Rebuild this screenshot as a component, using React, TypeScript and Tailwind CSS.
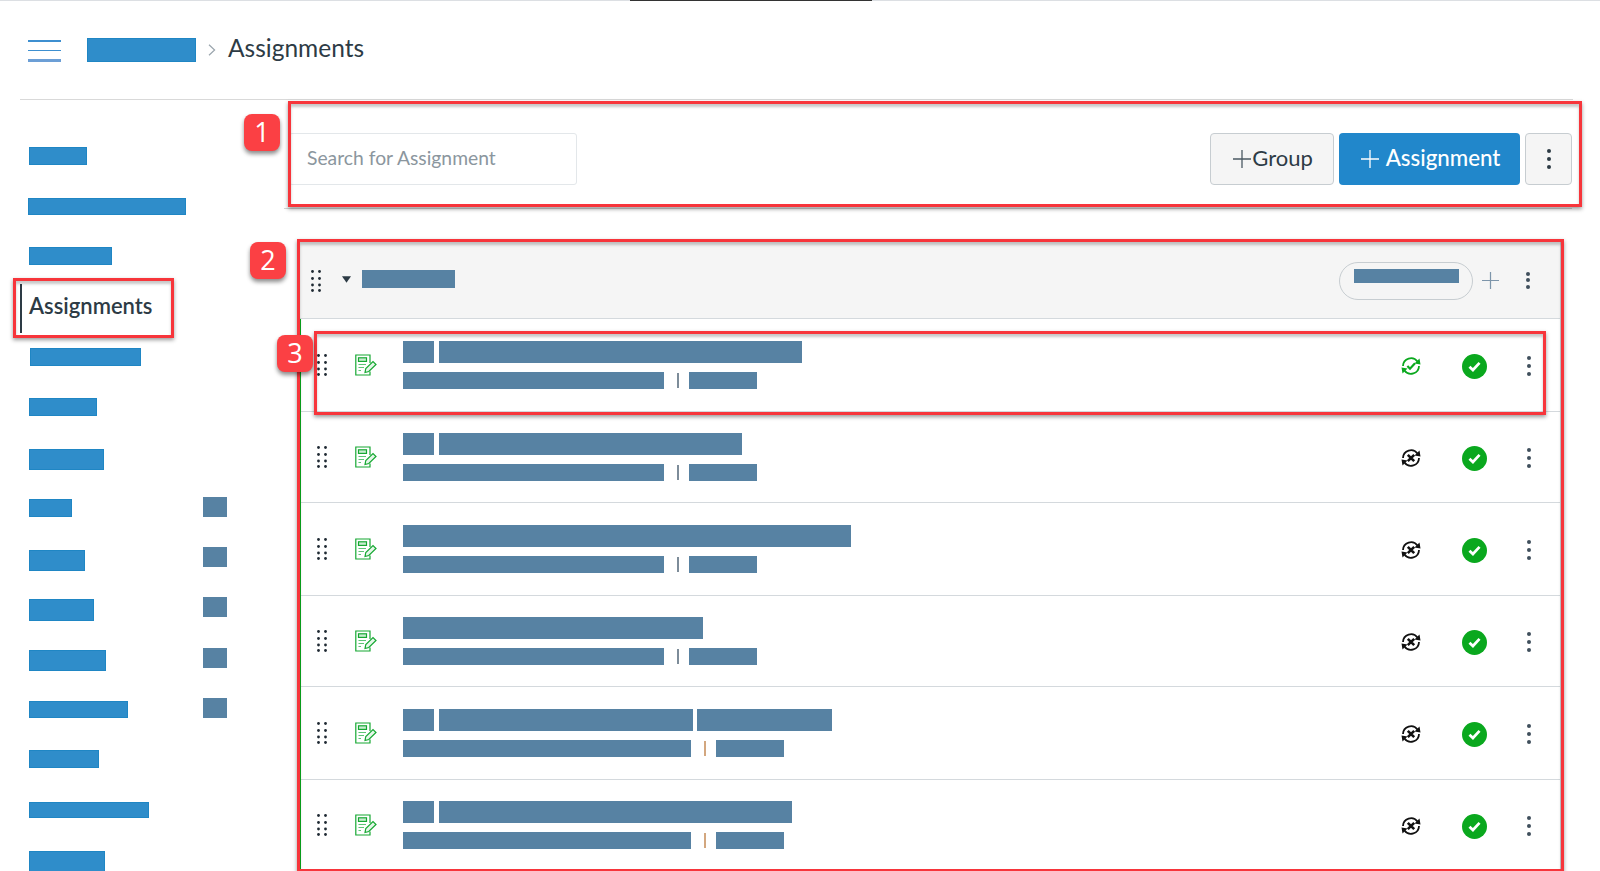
const sideRows = [
  { row: 'h-[51px]', bar: 'ml-[29px] w-[58px] h-[18px]' },
  { row: 'h-[49px]', bar: 'ml-[28px] w-[158px] h-[17px]' },
  { row: 'h-[37px]', bar: 'ml-[29px] w-[83px] h-[18px]' },
  { active: true, row: 'h-[49px] mb-[15px]', bar: '' },
  { row: 'h-[50px]', bar: 'ml-[30px] w-[111px] h-[18px]' },
  { row: 'h-[51px]', bar: 'ml-[29px] w-[68px] h-[18px]' },
  { row: 'h-[48px]', bar: 'ml-[29px] w-[75px] h-[21px]' },
  { row: 'h-[50px]', bar: 'ml-[29px] w-[43px] h-[18px] mt-[2px]', square: 'ml-[131px] mt-0' },
  { row: 'h-[50px]', bar: 'ml-[29px] w-[56px] h-[21px] mt-[3px]', square: 'ml-[118px] mt-0' },
  { row: 'h-[51px]', bar: 'ml-[29px] w-[65px] h-[22px] mt-[2px]', square: 'ml-[109px] mt-0' },
  { row: 'h-[50px]', bar: 'ml-[29px] w-[77px] h-[21px] mt-[2px]', square: 'ml-[97px] mt-0' },
  { row: 'h-[52px]', bar: 'ml-[29px] w-[99px] h-[17px] mt-[3px]', square: 'ml-[75px] mt-0' },
  { row: 'h-[52px]', bar: 'ml-[29px] w-[70px] h-[18px]' },
  { row: 'h-[49px]', bar: 'ml-[29px] w-[120px] h-[16px]' },
  { row: 'h-[30px]', bar: 'ml-[29px] w-[76px] h-[30px]' },
];

const assignmentRows = [
  { row: 'h-[93px]', prefix: true, title: ['w-[363px]'], left: 'w-[261px]', sep: 'bg-[#7d8c99]', right: 'w-[68px]', published: true },
  { row: 'h-[91px]', prefix: true, title: ['w-[303px]'], left: 'w-[261px]', sep: 'bg-[#7d8c99]', right: 'w-[68px]' },
  { row: 'h-[93px]', prefix: false, title: ['w-[448px]'], left: 'w-[261px]', sep: 'bg-[#7d8c99]', right: 'w-[68px]' },
  { row: 'h-[91px]', prefix: false, title: ['w-[300px]'], left: 'w-[261px]', sep: 'bg-[#7d8c99]', right: 'w-[68px]' },
  { row: 'h-[93px]', prefix: true, title: ['w-[254px]', 'w-[135px]'], left: 'w-[288px]', sep: 'bg-[#d3a77f]', right: 'w-[68px]' },
  { row: 'h-[91px]', prefix: true, title: ['w-[353px]'], left: 'w-[288px]', sep: 'bg-[#d3a77f]', right: 'w-[68px]' },
];

function DragDots({ className }: { className: string }) {
  return (
    <svg viewBox="0 0 10 22" className={className} fill="#1f2a33">
      <circle cx="1.5" cy="1.5" r="1.4" />
      <circle cx="8.5" cy="1.5" r="1.4" />
      <circle cx="1.5" cy="8.5" r="1.4" />
      <circle cx="8.5" cy="8.5" r="1.4" />
      <circle cx="1.5" cy="15" r="1.4" />
      <circle cx="8.5" cy="15" r="1.4" />
      <circle cx="1.5" cy="20.5" r="1.4" />
      <circle cx="8.5" cy="20.5" r="1.4" />
    </svg>
  );
}

function Kebab({ className }: { className: string }) {
  return (
    <span className={`flex flex-col items-center justify-between ${className}`}>
      <span className="h-1 w-1 rounded-full bg-current" />
      <span className="h-1 w-1 rounded-full bg-current" />
      <span className="h-1 w-1 rounded-full bg-current" />
    </span>
  );
}

function QuizIcon() {
  return (
    <svg viewBox="0 0 22 22" className="h-[22px] w-[22px] shrink-0" fill="none" stroke="#16a832" strokeWidth="1.2">
      <path d="M15 17.5V21H0.8V1H15V9" />
      <rect x="3.5" y="3.8" width="8" height="3.6" fill="#c9ecd0" />
      <path d="M3.5 10.5H11M3.5 13.5H9M3.5 16.5H6" stroke="#5fc477" />
      <path d="M10 18.5l.8-4L18 7.5l3 3-7.2 7z" fill="#e6f7ea" />
    </svg>
  );
}

function SyncIcon({ published }: { published?: boolean }) {
  const color = published ? '#0aa81e' : '#111111';
  return (
    <svg viewBox="0 0 20 18" className="h-[18px] w-[20px] shrink-0" fill="none" stroke={color} strokeWidth="1.8">
      <path d="M2 9A8 8 0 0 1 16.5 4.5" />
      <path d="M18 9A8 8 0 0 1 3.5 13.5" />
      <path d="M13.5 6.5L19.5 7.5 18.5 1.5z" fill={color} stroke="none" />
      <path d="M6.5 11.5L.5 10.5 1.5 16.5z" fill={color} stroke="none" />
      {published ? (
        <path d="M6.4 9l2.6 2.7L14 6.3" strokeWidth="2.2" />
      ) : (
        <path d="M6.8 5.8l6.4 6.4M13.2 5.8l-6.4 6.4" strokeWidth="2.6" />
      )}
    </svg>
  );
}

function CheckCircle() {
  return (
    <span className="flex h-[25px] w-[25px] shrink-0 items-center justify-center rounded-full bg-[#0aa81e]">
      <svg viewBox="0 0 14 12" className="h-[11px] w-[13px]" fill="none" stroke="white" strokeWidth="3">
        <path d="M1.5 6.2l3.8 3.6L12.5 2" />
      </svg>
    </span>
  );
}

function PlusMark({ className, stroke }: { className: string; stroke: string }) {
  return (
    <svg viewBox="0 0 18 18" className={className} fill="none" stroke={stroke} strokeWidth="1.3">
      <path d="M9 0v18M0 9h18" />
    </svg>
  );
}

function Callout({ className }: { className: string }) {
  return (
    <div className={`absolute border-[3px] border-[#f7353b] shadow-[0_2px_4px_rgba(0,0,0,0.4),inset_0_3px_3px_rgba(0,0,0,0.22)] ${className}`} />
  );
}

function Badge({ className, label }: { className: string; label: string }) {
  return (
    <div className={`absolute flex h-[37px] w-[36px] items-center justify-center rounded-[8px] bg-[#fb4044] font-['Open_Sans',sans-serif] text-[27px] font-medium text-white shadow-[0_3px_4px_rgba(0,0,0,0.45)] ${className}`}>
      {label}
    </div>
  );
}

export default function App() {
  return (
    <div className="relative h-[871px] overflow-hidden bg-white font-['Lato','Open_Sans',sans-serif] text-[#2d3b45]">
      <div className="flex h-[1px] bg-[#dcdfe3]">
        <div className="ml-[630px] w-[242px] bg-[#333333]" />
      </div>

      <header className="ml-[20px] flex h-[99px] w-[1553px] items-center border-b border-[#d9d9d9] pb-[1px] pl-[8px]">
        <div className="mt-[2px] flex h-[22px] w-[33px] flex-col justify-between">
          <span className="h-[2px] bg-[#3d8fd0]" />
          <span className="h-[1px] bg-[#3d8fd0]" />
          <span className="h-[3px] bg-[#6c9fd6]" />
        </div>
        <div className="ml-[26px] h-[24px] w-[109px] border border-[#1f86c4] bg-[#2f8dca]" />
        <svg viewBox="0 0 8 12" className="ml-[12px] h-[12px] w-[8px]" fill="none" stroke="#9aa5ad" strokeWidth="1.2">
          <path d="M1 .7L6.6 6 1 11.3" />
        </svg>
        <h1 className="ml-[12px] mt-[-2px] text-[24.5px] leading-none">Assignments</h1>
      </header>

      <div className="flex">
        <nav className="w-[284px] shrink-0 pt-[47px]">
          {sideRows.map((item, i) =>
            item.active ? (
              <div key={i} className={`ml-[20px] flex items-center border-l-2 border-[#2d3b45] pl-[7px] pb-[5px] ${item.row}`}>
                <span className="text-[22px] font-semibold leading-none">Assignments</span>
              </div>
            ) : (
              <div key={i} className={`flex items-start ${item.row}`}>
                <div className={`border border-[#1f86c4] bg-[#2f8dca] ${item.bar}`} />
                {item.square && <div className={`h-[20px] w-[24px] bg-[#5782a3] ${item.square}`} />}
              </div>
            ),
          )}
        </nav>

        <main className="w-[1288px] shrink-0">
          <div className="flex h-[109px] items-start justify-between border-b border-[#d4d4d4] pl-[5px] pt-[33px]">
            <div className="flex h-[52px] w-[288px] items-center rounded-[3px] border border-[#e3e7ea] pb-[2px] pl-[17px] text-[19.3px] text-[#8b969e]">
              Search for Assignment
            </div>
            <div className="flex gap-[5px]">
              <button className="flex h-[52px] w-[124px] items-center justify-center gap-[1px] rounded-[4px] border border-[#c7cdd1] bg-[#f5f5f5] pb-[4px] pl-[2px] text-[22px]">
                <PlusMark className="mt-[3px] h-[18px] w-[18px]" stroke="#4b5963" />
                Group
              </button>
              <button className="flex h-[52px] w-[181px] items-center justify-center gap-[7px] rounded-[4px] bg-[#2187cb] pb-[3px] pl-[2px] text-[22.3px] font-medium text-white">
                <PlusMark className="mt-[3px] h-[18px] w-[18px]" stroke="#ffffff" />
                Assignment
              </button>
              <button className="flex h-[52px] w-[47px] items-center justify-center rounded-[4px] border border-[#c7cdd1] bg-[#f5f5f5] text-[#2d3b45]">
                <Kebab className="h-[20px] w-1" />
              </button>
            </div>
          </div>

          <section className="ml-[14px] mt-[31px] w-[1263px] border-r border-[#c7cdd1]">
            <div className="flex h-[79px] items-center border-b border-[#d4d9dd] bg-[#f5f5f5] pl-[13px] pr-[30px] pt-[2px]">
              <DragDots className="mt-[2px] h-[22px] w-[10px] shrink-0" />
              <svg viewBox="0 0 10 7" className="ml-[21px] mt-[-1px] h-[7px] w-[9px] shrink-0" fill="#2d3b45">
                <path d="M0 0h10L5 7z" />
              </svg>
              <div className="ml-[11px] mt-[-2px] h-[18px] w-[93px] bg-[#5782a3]" />
              <div className="ml-auto mt-[2px] flex h-[38px] w-[134px] items-start justify-center rounded-full border border-[#c7cdd1] pt-[6px]">
                <div className="h-[14px] w-[105px] bg-[#5782a3]" />
              </div>
              <PlusMark className="ml-[9px] h-[17px] w-[17px] shrink-0" stroke="#7d95aa" />
              <Kebab className="ml-[27px] h-[17px] w-1 text-[#3f4f5c]" />
            </div>

            <div className="border-l-[3px] border-[#0aa81e]">
              {assignmentRows.map((item, i) => (
                <div key={i} className={`flex items-center border-b border-[#d4d9dd] pl-[16px] pr-[29px] last:border-b-0 last:pb-[1px] ${item.row}`}>
                  <DragDots className="h-[22px] w-[10px] shrink-0" />
                  <div className="ml-[28px]">
                    <QuizIcon />
                  </div>
                  <div className="ml-[26px] flex flex-col gap-[9px]">
                    <div className="flex h-[22px] gap-[5px]">
                      {item.prefix && <div className="w-[31px] bg-[#5782a3]" />}
                      {item.title.map((width, j) => (
                        <div key={j} className={`bg-[#5782a3] ${width} ${j > 0 ? '-ml-px' : ''}`} />
                      ))}
                    </div>
                    <div className="flex h-[17px] items-center">
                      <div className={`h-full bg-[#5782a3] ${item.left}`} />
                      <div className={`ml-[13px] h-[15px] w-[2px] ${item.sep}`} />
                      <div className={`ml-[10px] h-full bg-[#5782a3] ${item.right}`} />
                    </div>
                  </div>
                  <div className="ml-auto mt-[2px] flex items-center">
                    <SyncIcon published={item.published} />
                    <div className="ml-[41px]">
                      <CheckCircle />
                    </div>
                    <Kebab className="ml-[40px] h-[20px] w-1 text-[#3f4f5c]" />
                  </div>
                </div>
              ))}
            </div>
          </section>
        </main>
      </div>

      {/* callouts drawn over the page */}
      <Callout className="left-[288px] top-[101px] h-[106px] w-[1294px]" />
      <Callout className="left-[297px] top-[239px] h-[633px] w-[1267px]" />
      <Callout className="left-[314px] top-[331px] h-[84px] w-[1232px]" />
      <Callout className="left-[13px] top-[278px] h-[60px] w-[161px]" />
      <Badge className="left-[244px] top-[114px]" label="1" />
      <Badge className="left-[250px] top-[242px]" label="2" />
      <Badge className="left-[277px] top-[335px]" label="3" />
    </div>
  );
}
